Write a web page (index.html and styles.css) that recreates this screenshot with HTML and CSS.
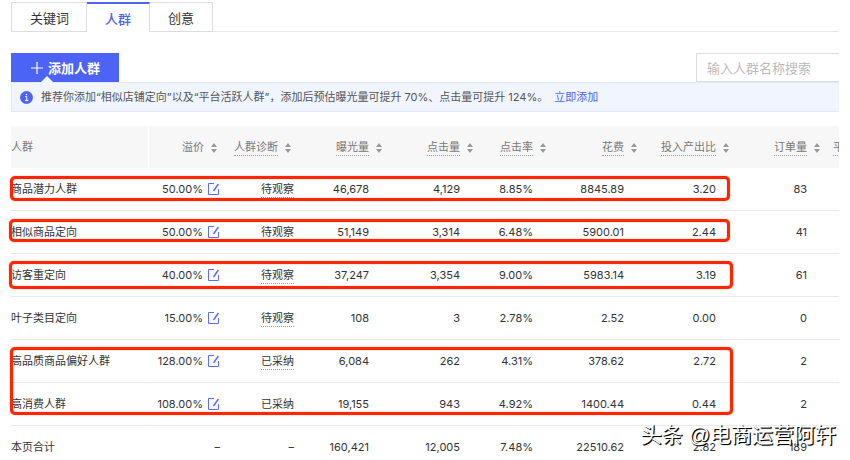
FILE: index.html
```html
<!DOCTYPE html>
<html lang="zh-CN">
<head>
    <meta charset="utf-8">
    <title>人群</title>
    <meta name="viewport" content="width=device-width, initial-scale=1">
    <link rel="stylesheet" href="styles.css">
</head>

<body>
    <svg class="symbols" aria-hidden="true">
        <symbol id="sort" viewBox="0 0 6 10">
            <path d="M3 0 L6 4 H0 Z M3 10 L6 6 H0 Z" fill="#999"/>
        </symbol>
        <symbol id="edit" viewBox="0 0 12 14">
            <path d="M6 1.5 H0.5 V12.5 H10.5 V7" fill="none" stroke="#5b6ef7"/>
            <path d="M5.5 9 L10.4 2" fill="none" stroke="#5b6ef7" stroke-width="1.5"/>
        </symbol>
    </svg>

    <nav class="tabs">
        <button class="tab">关键词</button>
        <button class="tab active">人群</button>
        <button class="tab">创意</button>
    </nav>

    <div class="toolbar">
        <button class="addBtn">
            <svg class="plus" viewBox="0 0 12 12"><path d="M6 0 V12 M0 6 H12" stroke="#fff" stroke-width="1.2"/></svg>
            添加人群
        </button>
        <input class="search" type="text" placeholder="输入人群名称搜索" aria-label="输入人群名称搜索">
    </div>

    <div class="notice">
        <svg class="info" viewBox="0 0 13 13">
            <circle cx="6.5" cy="6.5" r="6.5" fill="#4c63f6"/>
            <path d="M5.2 5.5 H6.8 V9.5 M5 9.6 H8.4" fill="none" stroke="#fff"/>
            <circle cx="6.5" cy="3.5" r="0.8" fill="#fff"/>
        </svg>
        <span>推荐你添加“相似店铺定向”以及“平台活跃人群”，添加后预估曝光量可提升 70%、点击量可提升 124%。</span>
        <a href="#">立即添加</a>
    </div>

    <div class="tableWrap">
        <table class="crowd">
            <colgroup>
                <col class="c-name"><col class="c-price"><col class="c-diag"><col class="c-num"><col class="c-num">
                <col class="c-rate"><col class="c-num"><col class="c-roi"><col class="c-num"><col class="c-avg">
            </colgroup>
            <thead>
                <tr>
                    <th>人群</th>
                    <th>溢价<svg class="sort"><use href="#sort"/></svg></th>
                    <th><span class="tip">人群诊断</span><svg class="sort"><use href="#sort"/></svg></th>
                    <th><span class="tip">曝光量</span><svg class="sort"><use href="#sort"/></svg></th>
                    <th><span class="tip">点击量</span><svg class="sort"><use href="#sort"/></svg></th>
                    <th><span class="tip">点击率</span><svg class="sort"><use href="#sort"/></svg></th>
                    <th><span class="tip">花费</span><svg class="sort"><use href="#sort"/></svg></th>
                    <th><span class="tip">投入产出比</span><svg class="sort"><use href="#sort"/></svg></th>
                    <th><span class="tip">订单量</span><svg class="sort"><use href="#sort"/></svg></th>
                    <th><span class="tip">平</span></th>
                </tr>
            </thead>
            <tbody>
                <tr>
                    <td>商品潜力人群</td>
                    <td>50.00%<svg class="edit"><use href="#edit"/></svg></td>
                    <td><span class="tip">待观察</span></td>
                    <td>46,678</td><td>4,129</td><td>8.85%</td><td>8845.89</td><td>3.20</td><td>83</td><td></td>
                </tr>
                <tr>
                    <td>相似商品定向</td>
                    <td>50.00%<svg class="edit"><use href="#edit"/></svg></td>
                    <td><span class="tip">待观察</span></td>
                    <td>51,149</td><td>3,314</td><td>6.48%</td><td>5900.01</td><td>2.44</td><td>41</td><td></td>
                </tr>
                <tr>
                    <td>访客重定向</td>
                    <td>40.00%<svg class="edit"><use href="#edit"/></svg></td>
                    <td><span class="tip">待观察</span></td>
                    <td>37,247</td><td>3,354</td><td>9.00%</td><td>5983.14</td><td>3.19</td><td>61</td><td></td>
                </tr>
                <tr>
                    <td>叶子类目定向</td>
                    <td>15.00%<svg class="edit"><use href="#edit"/></svg></td>
                    <td><span class="tip">待观察</span></td>
                    <td>108</td><td>3</td><td>2.78%</td><td>2.52</td><td>0.00</td><td>0</td><td></td>
                </tr>
                <tr>
                    <td>高品质商品偏好人群</td>
                    <td>128.00%<svg class="edit"><use href="#edit"/></svg></td>
                    <td><span class="tip">已采纳</span></td>
                    <td>6,084</td><td>262</td><td>4.31%</td><td>378.62</td><td>2.72</td><td>2</td><td></td>
                </tr>
                <tr>
                    <td>高消费人群</td>
                    <td>108.00%<svg class="edit"><use href="#edit"/></svg></td>
                    <td><span class="tip">已采纳</span></td>
                    <td>19,155</td><td>943</td><td>4.92%</td><td>1400.44</td><td>0.44</td><td>2</td><td></td>
                </tr>
                <tr>
                    <td>本页合计</td>
                    <td>–</td>
                    <td>–</td>
                    <td>160,421</td><td>12,005</td><td>7.48%</td><td>22510.62</td><td>2.82</td><td>189</td><td></td>
                </tr>
            </tbody>
        </table>
    </div>

    <!-- highlight boxes drawn over the table -->
    <div class="mark mark1"></div>
    <div class="mark mark2"></div>
    <div class="mark mark3"></div>
    <div class="mark mark4"></div>

    <div class="watermark">头条 @电商运营阿轩</div>
</body>
</html>
```

FILE: styles.css
```css
* {
    box-sizing: border-box;
}

body {
    position: relative;
    margin: 0;
    padding: 2px 11px 0;
    background: #fff;
    color: #333;
    font-family: Inter, "Noto Sans CJK SC", sans-serif;
    font-size: 11px;
    line-height: 16px;
    overflow: hidden;
}

button, input {
    font-family: inherit;
    font-size: 13px;
}

.symbols {
    position: absolute;
    width: 0;
    height: 0;
}

/* Tabs */
.tabs {
    display: flex;
    height: 30px;
    box-shadow: inset 0 -1px #e8e8e8;
}

.tab {
    padding: 0 18px;
    border: 1px solid #ddd;
    border-left: none;
    background: #fff;
    color: #333;
    cursor: pointer;
}

.tab:first-child {
    padding-right: 17px;
    border-left: 1px solid #ddd;
}

.tab.active {
    border-top: 2px solid #4c63f6;
    border-bottom: none;
    color: #4c63f6;
    font-weight: 500;
}

/* Toolbar */
.toolbar {
    display: flex;
    justify-content: space-between;
    margin-top: 21px;
    height: 29px;
}

.addBtn {
    display: flex;
    align-items: center;
    gap: 5px;
    padding: 0 19px 0 20px;
    border: none;
    background: #4c63f6;
    color: #fff;
    font-weight: 700;
    cursor: pointer;
}

.plus {
    width: 12px;
    height: 12px;
}

.search {
    width: 143px;
    padding: 0 10px;
    border: 1px solid #ddd;
    border-right: none;
    color: #333;
}

.search::placeholder {
    color: #bbb;
}

/* Notice */
.notice {
    position: relative;
    display: flex;
    align-items: center;
    height: 30px;
    padding-left: 8px;
    border: 1px solid #e2e9fb;
    border-right: none;
    background: #f1f5ff;
    color: #555;
    white-space: nowrap;
}

.notice::before {
    content: '';
    position: absolute;
    left: 28px;
    top: -7px;
    border: 7px solid transparent;
    border-top: none;
    border-bottom-color: #f1f5ff;
}

.notice a {
    margin-left: 6px;
    color: #4c63f6;
    text-decoration: none;
}

.info {
    width: 13px;
    height: 13px;
    margin-right: 8px;
}

/* Table */
.tableWrap {
    margin-top: 14px;
    overflow: hidden;
}

.crowd {
    width: 900px;
    table-layout: fixed;
    border-collapse: separate;
    border-spacing: 0;
}

.c-name { width: 138px; }
.c-price { width: 79px; }
.c-diag { width: 74px; }
.c-num { width: 91px; }
.c-rate { width: 73px; }
.c-roi { width: 92px; }

.crowd th {
    height: 42px;
    padding: 0 8px 0 0;
    background: #f7f7f7;
    color: #777;
    font-weight: 400;
    text-align: right;
    white-space: nowrap;
}

.crowd td {
    height: 43px;
    padding: 0 24px 0 0;
    border-bottom: 1px solid #e9e9e9;
    text-align: right;
    white-space: nowrap;
}

.crowd td:nth-child(2),
.crowd td:nth-child(3) {
    padding-right: 8px;
}

.crowd th:first-child,
.crowd td:first-child {
    padding: 0;
    border-right: 1px solid #fff;
    text-align: left;
}

.crowd th:last-child {
    padding-left: 2px;
    text-align: left;
}

.tip {
    display: inline-block;
    border-bottom: 1px dotted #999;
}

.sort {
    width: 6px;
    height: 10px;
    margin: 0 3px 0 7px;
    vertical-align: middle;
}

.edit {
    width: 12px;
    height: 14px;
    margin-left: 5px;
    vertical-align: -3px;
}

/* Highlight boxes */
.mark {
    position: absolute;
    border: 3px solid #ff2600;
    border-radius: 5px;
    box-shadow: 0 0 1px #ff2600, inset 0 0 1px #ff2600;
    pointer-events: none;
}

.mark1 { left: 10px; top: 176px; width: 720px; height: 25px; }
.mark2 { left: 9px; top: 219px; width: 721px; height: 23px; }
.mark3 { left: 9px; top: 261px; width: 724px; height: 28px; }
.mark4 { left: 10px; top: 347px; width: 723px; height: 68px; }

.watermark {
    position: absolute;
    right: 14px;
    top: 420px;
    color: #fff;
    font-family: "Liberation Sans", "Noto Sans CJK SC", sans-serif;
    font-size: 21px;
    line-height: 30px;
    text-shadow: 1px 1px 1px #000, 1px 1px 0 #222;
}
```
